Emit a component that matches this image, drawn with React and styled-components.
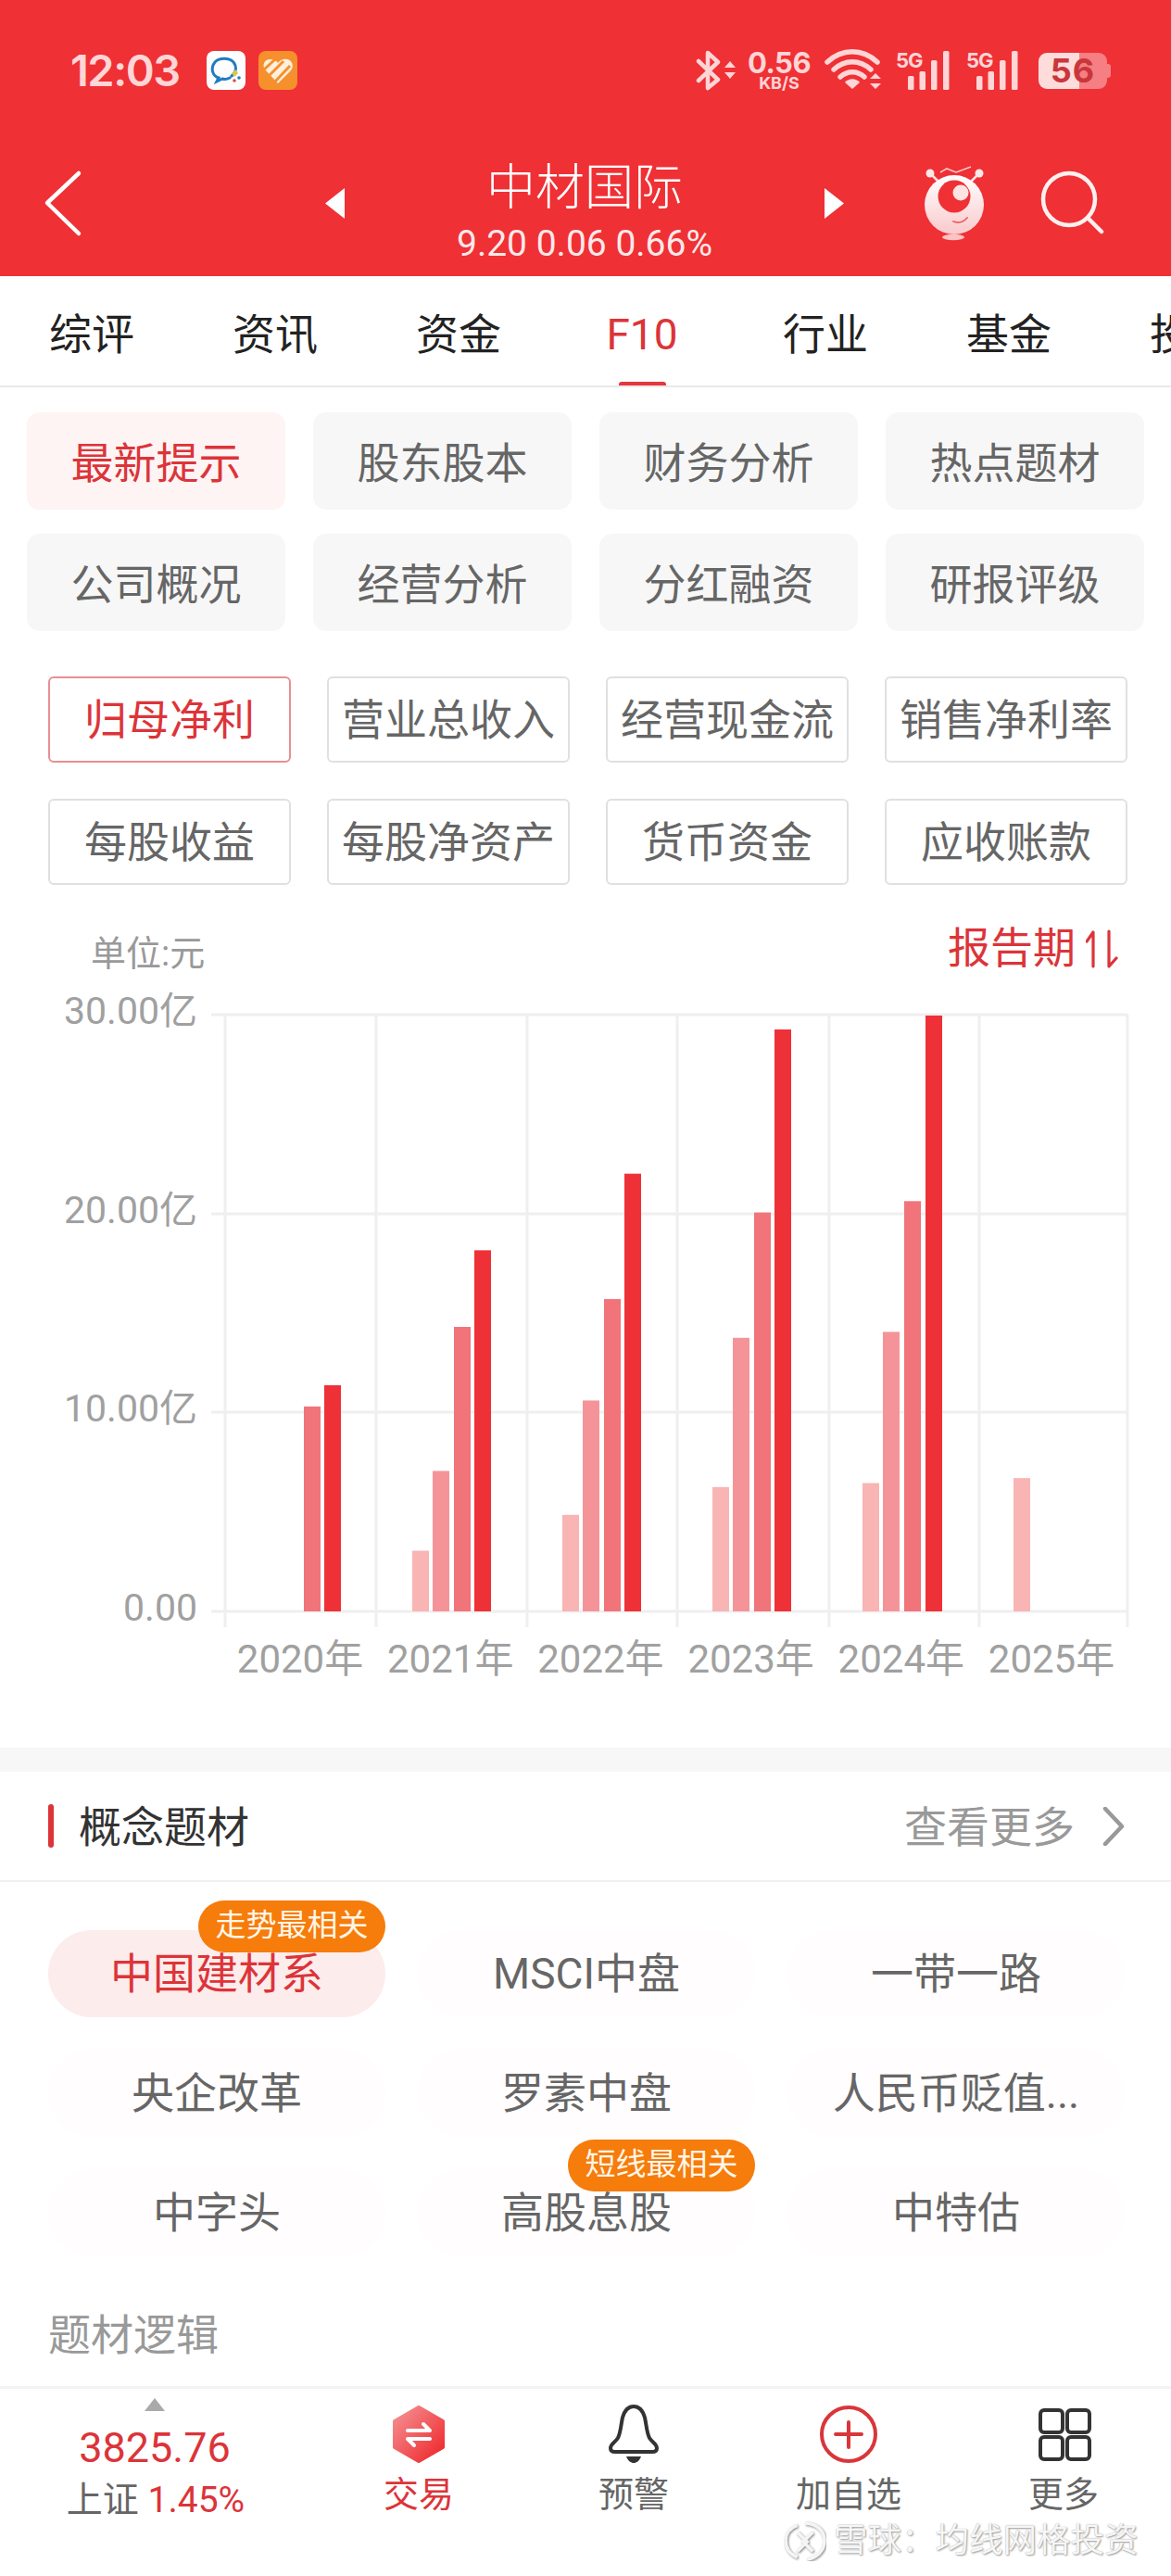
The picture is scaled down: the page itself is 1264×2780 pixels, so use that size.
import React from "react";
import styled, { createGlobalStyle } from "styled-components";

const Global = createGlobalStyle`
  html, body { margin: 0; padding: 0; background: #fff; }
  * { box-sizing: border-box; }
  body { font-family: Roboto, "Noto Sans CJK SC", sans-serif; }
`;

const RED = "#ef3035";
const TEXT_RED = "#dc3439";

const Page = styled.div`
  position: relative;
  width: 1264px;
  height: 2780px;
  overflow: hidden;
  display: flex;
  flex-direction: column;
  background: #fff;
`;

const Header = styled.header`
  height: 298px;
  background: ${RED};
  display: flex;
  flex-direction: column;
  padding-top: 53px;
`;

const StatusBar = styled.div`
  height: 46px;
  display: flex;
  align-items: center;
  color: #ffd5d6;
  padding-left: 76px;
`;

const Clock = styled.div`
  font: 600 47px/46px Inter, sans-serif;
  letter-spacing: -1.5px;
  width: 147px;
`;

const AppBadge = styled.svg`
  width: 42px;
  height: 42px;
  margin-right: 14px;
  display: block;
`;

const StatusRight = styled.div`
  margin-left: auto;
  display: flex;
  align-items: center;
  height: 46px;
`;

const NetSpeed = styled.div`
  width: 70px;
  margin: 0 14px 0 11px;
  display: flex;
  flex-direction: column;
  align-items: center;
  font-family: Inter, sans-serif;
  font-weight: 700;
`;

const NetValue = styled.span`
  font-size: 31px;
  line-height: 27px;
  letter-spacing: -0.5px;
`;

const NetUnit = styled.span`
  font-size: 18px;
  line-height: 17px;
`;

const Battery = styled.div`
  position: relative;
  width: 74px;
  height: 39px;
  margin: 0 69px 0 21px;
  border-radius: 9px;
  background: linear-gradient(to right, #ffdcdc 59%, #f57f82 59%);
  color: #c9363b;
  font: 700 36px/39px Inter, sans-serif;
  text-align: center;
  letter-spacing: 1px;
  &::after {
    content: "";
    position: absolute;
    right: -4px;
    top: 12px;
    width: 4px;
    height: 15px;
    border-radius: 0 3px 3px 0;
    background: #f57f82;
  }
`;

const NavRow = styled.div`
  display: grid;
  grid-template-columns: 351px 21px 518px 21px 1fr;
  align-items: center;
  margin-top: 25px;
  height: 174px;
  padding-top: 16px;
`;

const BackIcon = styled.svg`
  width: 44px;
  height: 74px;
  margin-left: 46px;
  display: block;
`;

const Arrow = styled.svg`
  width: 21px;
  height: 33px;
  display: block;
`;

const TitleBlock = styled.div`
  display: flex;
  flex-direction: column;
  align-items: center;
  color: #fff;
  padding-top: 17px;
`;

const StockName = styled.div`
  font-size: 53px;
  line-height: 62px;
  font-weight: 300;
`;

const StockQuote = styled.div`
  font-size: 39px;
  line-height: 42px;
  margin-top: 8px;
  color: #ffe9e9;
`;

const NavActions = styled.div`
  display: flex;
  align-items: center;
  padding-left: 87px;
`;

const Tabs = styled.nav`
  height: 120px;
  display: flex;
  border-bottom: 2px solid #e9e9e9;
  overflow: hidden;
`;

const Tab = styled.div`
  flex: 0 0 198px;
  height: 120px;
  position: relative;
  padding-top: 32px;
  text-align: center;
  font-size: 46px;
  line-height: 62px;
  color: ${(p) => (p.$active ? TEXT_RED : "#222")};
  ${(p) =>
    p.$active &&
    `
    background: #fff;
    &::after {
      content: "";
      position: absolute;
      left: 74px;
      bottom: 0;
      width: 51px;
      height: 6px;
      border-radius: 3px;
      background: #e5383e;
    }
  `}
`;

const PrimaryGrid = styled.div`
  margin-top: 27px;
  padding: 0 28px 0 29px;
  display: grid;
  grid-template-columns: repeat(4, 279px);
  column-gap: 30px;
  grid-auto-rows: 105px;
  row-gap: 26px;
`;

const PrimaryButton = styled.div`
  display: flex;
  align-items: center;
  justify-content: center;
  padding-bottom: 3px;
  border-radius: 14px;
  font-size: 46px;
  background: ${(p) => (p.$active ? "#fef4f4" : "#f7f7f7")};
  color: ${(p) => (p.$active ? TEXT_RED : "#666")};
`;

const MetricGrid = styled.div`
  margin-top: 49px;
  padding-left: 52px;
  display: grid;
  grid-template-columns: repeat(4, 262px);
  column-gap: 39px;
  grid-auto-rows: 93px;
  row-gap: 39px;
`;

const MetricButton = styled.div`
  display: flex;
  align-items: center;
  justify-content: center;
  padding-bottom: 8px;
  border-radius: 6px;
  font-size: 46px;
  white-space: nowrap;
  border: 2.5px solid ${(p) => (p.$active ? "#e88f92" : "#e0e0e0")};
  color: ${(p) => (p.$active ? TEXT_RED : "#666")};
`;

const ChartHead = styled.div`
  margin-top: 45px;
  height: 60px;
  padding: 0 57px 0 98px;
  display: flex;
  justify-content: space-between;
`;

const UnitLabel = styled.div`
  font-size: 38px;
  line-height: 48px;
  margin-top: 5px;
  color: #999;
`;

const PeriodSort = styled.div`
  display: flex;
  align-items: flex-start;
  font-size: 46px;
  line-height: 48px;
  margin-top: -1px;
  color: ${TEXT_RED};
`;

const SortIcon = styled.svg`
  width: 35px;
  height: 46px;
  margin-left: 11px;
  margin-top: 2px;
  display: block;
`;

const ChartSvg = styled.svg`
  display: block;
  width: 1264px;
  height: 826px;
  font-family: Roboto, "Noto Sans CJK SC", sans-serif;
`;

const Band = styled.div`
  height: 26px;
  background: #f7f7f7;
  flex: none;
`;

const SectionHead = styled.div`
  height: 119px;
  border-bottom: 2px solid #f0f0f0;
  display: flex;
  align-items: center;
  padding: 0 50px 0 52px;
`;

const SectionMark = styled.span`
  width: 6px;
  height: 47px;
  border-radius: 3px;
  background: #dc3439;
  margin-right: 27px;
`;

const SectionTitle = styled.div`
  font-size: 46px;
  color: #333;
  padding-bottom: 5px;
`;

const MoreLink = styled.div`
  margin-left: auto;
  display: flex;
  align-items: center;
  font-size: 46px;
  color: #999;
`;

const MoreLabel = styled.span`
  padding-bottom: 5px;
`;

const MoreChevron = styled.svg`
  width: 24px;
  height: 42px;
  margin-left: 30px;
  display: block;
`;

const PillGrid = styled.div`
  margin-top: 52px;
  padding-left: 52px;
  display: grid;
  grid-template-columns: repeat(3, 364px);
  column-gap: 35px;
  grid-auto-rows: 94px;
  row-gap: 35px;
`;

const Pill = styled.div`
  position: relative;
  display: flex;
  align-items: center;
  justify-content: center;
  padding-bottom: 8px;
  border-radius: 47px;
  font-size: 46px;
  background: ${(p) => (p.$active ? "#fdecec" : "#fffdfd")};
  color: ${(p) => (p.$active ? TEXT_RED : "#666")};
`;

const PillBadge = styled.span`
  position: absolute;
  right: 0;
  top: -32px;
  width: 202px;
  height: 56px;
  border-radius: 28px;
  background: #f67c0b;
  color: #fff6e8;
  font-size: 33px;
  line-height: 54px;
  text-align: center;
  white-space: nowrap;
`;

const LogicLabel = styled.div`
  margin-top: 52px;
  padding-left: 52px;
  font-size: 46px;
  line-height: 66px;
  color: #999;
`;

const BottomBar = styled.footer`
  margin-top: auto;
  height: 205px;
  border-top: 3px solid #f3f3f3;
  display: grid;
  grid-template-columns: 336px repeat(4, 232px);
  padding-top: 17px;
`;

const IndexCell = styled.div`
  display: flex;
  flex-direction: column;
  align-items: center;
  margin-top: -7px;
`;

const IndexCaret = styled.svg`
  width: 22px;
  height: 14px;
  display: block;
  margin-left: -2px;
`;

const IndexValue = styled.div`
  margin-top: 17px;
  font-size: 45px;
  line-height: 46px;
  color: ${TEXT_RED};
  margin-left: -2px;
`;

const IndexLine = styled.div`
  margin-top: 11px;
  font-size: 39px;
  line-height: 44px;
  color: #666;
  white-space: nowrap;
`;

const IndexChange = styled.span`
  color: ${TEXT_RED};
`;

const BarItem = styled.div`
  display: flex;
  flex-direction: column;
  align-items: center;
`;

const BarIcon = styled.svg`
  width: 80px;
  height: 64px;
  display: block;
`;

const BarLabel = styled.div`
  margin-top: 11px;
  font-size: 38px;
  line-height: 44px;
  color: ${(p) => (p.$active ? TEXT_RED : "#666")};
`;

const Watermark = styled.div`
  position: absolute;
  left: 846px;
  top: 2720px;
  display: flex;
  align-items: center;
  gap: 8px;
  color: #f6f6f6;
  font-size: 36.5px;
  line-height: 42px;
  white-space: nowrap;
  text-shadow: 1px 1px 2px #999, 0 0 1px #aaa;
`;

const WatermarkLogo = styled.svg`
  width: 46px;
  height: 44px;
  display: block;
`;

const TAB_NAMES = ["综评", "资讯", "资金", "F10", "行业", "基金", "投资"];
const PRIMARY = ["最新提示", "股东股本", "财务分析", "热点题材", "公司概况", "经营分析", "分红融资", "研报评级"];
const METRICS = ["归母净利", "营业总收入", "经营现金流", "销售净利率", "每股收益", "每股净资产", "货币资金", "应收账款"];
const PILLS = [
  { name: "中国建材系", active: true, badge: "走势最相关" },
  { name: "MSCI中盘" },
  { name: "一带一路" },
  { name: "央企改革" },
  { name: "罗素中盘" },
  { name: "人民币贬值..." },
  { name: "中字头" },
  { name: "高股息股", badge: "短线最相关" },
  { name: "中特估" },
];

// Bars: left edge, billions of yuan, reporting quarter
const QUARTER_FILL = ["#f9b4b4", "#f59498", "#f07479", "#ee3136"];
const BARS = [
  [327, 10.3, 2], [349, 11.37, 3],
  [444, 3.05, 0], [466, 7.06, 1], [489, 14.3, 2], [511, 18.15, 3],
  [606, 4.85, 0], [628, 10.6, 1], [651, 15.7, 2], [673, 22.0, 3],
  [768, 6.25, 0], [790, 13.75, 1], [813, 20.05, 2], [835, 29.25, 3],
  [930, 6.45, 0], [952, 14.05, 1], [975, 20.62, 2], [998, 29.95, 3],
  [1093, 6.7, 0],
];

const AXIS_ZERO = 679;
const PX_PER_BILLION = 21.47;
const V_LINES = [243, 406, 569, 731, 895, 1057, 1217];
const Y_TICKS = [["30.00亿", 35], ["20.00亿", 250], ["10.00亿", 464], ["0.00", 679]];
const YEARS = ["2020年", "2021年", "2022年", "2023年", "2024年", "2025年"];

function Chart() {
  return (
    <ChartSvg viewBox="0 0 1264 826">
      {V_LINES.map((x) => (
        <line key={x} x1={x} x2={x} y1={35} y2={696} stroke="#efefef" strokeWidth="3" />
      ))}
      {Y_TICKS.map(([label, y]) => (
        <g key={label}>
          <line x1={228} x2={1217} y1={y} y2={y} stroke="#efefef" strokeWidth="3" />
          <text x={213} y={y + 10} textAnchor="end" fontSize="41" fill="#a0a0a0">{label}</text>
        </g>
      ))}
      {BARS.map(([x, value, q]) => (
        <rect
          key={x}
          x={x + 1}
          y={AXIS_ZERO - value * PX_PER_BILLION}
          width={18}
          height={value * PX_PER_BILLION}
          fill={QUARTER_FILL[q]}
        />
      ))}
      {YEARS.map((year, i) => (
        <text key={year} x={324 + i * 162.2} y={745} textAnchor="middle" fontSize="42" fill="#a0a0a0">{year}</text>
      ))}
    </ChartSvg>
  );
}

function StatusIcons() {
  const stroke = "#ffd5d6";
  return (
    <StatusRight>
      <svg width="44" height="46" viewBox="752 53 44 46" style={{ display: "block" }}>
        <path d="M755 66 L776 86 L765 95 V57 L776 67 L755 87" fill="none" stroke={stroke} strokeWidth="4.5" strokeLinejoin="round" strokeLinecap="round" />
        <path d="M783 73 L789 66 L795 73 Z M783 78 L789 85 L795 78 Z" fill={stroke} />
      </svg>
      <NetSpeed>
        <NetValue>0.56</NetValue>
        <NetUnit>KB/S</NetUnit>
      </NetSpeed>
      <svg width="62" height="46" viewBox="889 53 62 46" style={{ display: "block" }}>
        <path d="M892 67 C908 52 930 52 946 67" fill="none" stroke={stroke} strokeWidth="5.5" strokeLinecap="round" />
        <path d="M899 75 C911 64 927 64 939 75" fill="none" stroke={stroke} strokeWidth="5.5" strokeLinecap="round" />
        <path d="M906 83 C914 76 924 76 932 83" fill="none" stroke={stroke} strokeWidth="5.5" strokeLinecap="round" />
        <path d="M919 96 L911 89 C915 84 923 84 927 89 Z" fill={stroke} />
        <path d="M938 85 L944 79 L950 85 Z M938 90 L944 96 L950 90 Z" fill={stroke} />
      </svg>
      <svg width="60" height="46" viewBox="963 53 60 46" style={{ marginLeft: 14, display: "block", fontFamily: "Inter, sans-serif" }}>
        <text x="964" y="73" fontSize="22" fontWeight="700" fill={stroke} letterSpacing="-1">5G</text>
        <rect x="977" y="82" width="6.5" height="15" rx="1.5" fill={stroke} />
        <rect x="989.5" y="77" width="6.5" height="20" rx="1.5" fill={stroke} />
        <rect x="1002" y="65" width="6.5" height="32" rx="1.5" fill={stroke} />
        <rect x="1015" y="55" width="6.5" height="42" rx="1.5" fill={stroke} />
      </svg>
      <svg width="58" height="46" viewBox="1039 53 58 46" style={{ marginLeft: 16, display: "block", fontFamily: "Inter, sans-serif" }}>
        <text x="1040" y="73" fontSize="22" fontWeight="700" fill={stroke} letterSpacing="-1">5G</text>
        <rect x="1051" y="82" width="6.5" height="15" rx="1.5" fill={stroke} />
        <rect x="1063.5" y="77" width="6.5" height="20" rx="1.5" fill={stroke} />
        <rect x="1076" y="65" width="6.5" height="32" rx="1.5" fill={stroke} />
        <rect x="1089" y="55" width="6.5" height="42" rx="1.5" fill={stroke} />
      </svg>
      <Battery>56</Battery>
    </StatusRight>
  );
}

export default function App() {
  return (
    <Page>
      <Global />
      <Header>
        <StatusBar>
          <Clock>12:03</Clock>
          <AppBadge viewBox="0 0 42 42">
            <rect width="42" height="42" rx="8" fill="#fdfdfd" />
            <path d="M27 27 C32 23 33 17 29 12 C24 7 14 7 9 12 C4 18 6 27 13 29 L11 33 L17 30 C20 31 23 30 25 29" fill="none" stroke="#1f7cc0" strokeWidth="3" strokeLinecap="round" />
            <path d="M27 24 L31 20 L34 24 L30 28 Z" fill="#d8c94a" />
            <circle cx="35" cy="29" r="1.8" fill="#1f7cc0" />
            <circle cx="30" cy="32" r="1.8" fill="#d8503c" />
          </AppBadge>
          <AppBadge viewBox="0 0 42 42">
            <rect width="42" height="42" rx="8" fill="#f6902c" />
            <path d="M21 35 L7 20 C3 14 8 8 13 9 C17 9 20 11 21 13 C23 10 27 8 31 9 C36 10 39 16 35 21 Z" fill="#fdf0dc" />
            <path d="M5 21 L18 9 M11 27 L27 11 M18 33 L34 16" stroke="#f6902c" strokeWidth="3" />
          </AppBadge>
          <StatusIcons />
        </StatusBar>
        <NavRow>
          <BackIcon viewBox="46 182 44 74">
            <path d="M85 187 L51 219 L85 252" fill="none" stroke="#fff" strokeWidth="4.5" strokeLinecap="round" strokeLinejoin="round" />
          </BackIcon>
          <Arrow viewBox="0 0 21 33"><path d="M21 0 V33 L0 16.5 Z" fill="#fff" /></Arrow>
          <TitleBlock>
            <StockName>中材国际</StockName>
            <StockQuote>9.20 0.06 0.66%</StockQuote>
          </TitleBlock>
          <Arrow viewBox="0 0 21 33"><path d="M0 0 V33 L21 16.5 Z" fill="#fff" /></Arrow>
          <NavActions>
            <svg width="66" height="84" viewBox="998 178 66 84" style={{ display: "block" }}>
              <defs>
                <linearGradient id="mascotBody" x1="0" y1="0" x2="0" y2="1">
                  <stop offset="0" stopColor="#fff" />
                  <stop offset="1" stopColor="#f9c9cb" />
                </linearGradient>
              </defs>
              <path d="M1015 187 L1022 183 L1032 187 L1048 181" fill="none" stroke="#fbc9ca" strokeWidth="1.6" />
              <path d="M1004 188 L1014 198 M1057 188 L1047 198" stroke="#fde2e2" strokeWidth="2.5" />
              <circle cx="1004" cy="188" r="4.5" fill="#fde8e8" />
              <circle cx="1057" cy="188" r="4.5" fill="#fde8e8" />
              <circle cx="1030" cy="222" r="32" fill="url(#mascotBody)" />
              <circle cx="1030" cy="213" r="17.5" fill={RED} />
              <circle cx="1037" cy="209" r="8.5" fill="#fde3e3" />
              <path d="M1029 240 C1034 242 1040 241 1044 236" fill="none" stroke="#ee5a5f" strokeWidth="1.8" strokeLinecap="round" />
              <ellipse cx="1029" cy="257" rx="12" ry="3.2" fill="#fbc3c4" />
            </svg>
            <svg width="70" height="70" viewBox="1120 185 70 70" style={{ marginLeft: 58, display: "block" }}>
              <circle cx="1152" cy="216" r="28" fill="none" stroke="#fff0f0" strokeWidth="4.5" />
              <path d="M1172 236 L1187 251" stroke="#fff0f0" strokeWidth="4.5" strokeLinecap="round" />
            </svg>
          </NavActions>
        </NavRow>
      </Header>

      <Tabs>
        {TAB_NAMES.map((name) => (
          <Tab key={name} $active={name === "F10"}>{name}</Tab>
        ))}
      </Tabs>

      <PrimaryGrid>
        {PRIMARY.map((name, i) => (
          <PrimaryButton key={name} $active={i === 0}>{name}</PrimaryButton>
        ))}
      </PrimaryGrid>

      <MetricGrid>
        {METRICS.map((name, i) => (
          <MetricButton key={name} $active={i === 0}>{name}</MetricButton>
        ))}
      </MetricGrid>

      <ChartHead>
        <UnitLabel>单位:元</UnitLabel>
        <PeriodSort>
          报告期
          <SortIcon viewBox="1172 1001 35 46">
            <path d="M1173 1016 L1180 1006 V1043" fill="none" stroke={TEXT_RED} strokeWidth="3.2" strokeLinecap="round" strokeLinejoin="round" />
            <path d="M1197 1005 V1043 L1205 1034" fill="none" stroke={TEXT_RED} strokeWidth="3.2" strokeLinecap="round" strokeLinejoin="round" />
          </SortIcon>
        </PeriodSort>
      </ChartHead>

      <Chart />

      <Band />

      <SectionHead>
        <SectionMark />
        <SectionTitle>概念题材</SectionTitle>
        <MoreLink>
          <MoreLabel>查看更多</MoreLabel>
          <MoreChevron viewBox="0 0 24 42">
            <path d="M3 2 L21 21 L3 40" fill="none" stroke="#999" strokeWidth="4.5" strokeLinecap="round" strokeLinejoin="round" />
          </MoreChevron>
        </MoreLink>
      </SectionHead>

      <PillGrid>
        {PILLS.map((pill) => (
          <Pill key={pill.name} $active={pill.active}>
            {pill.name}
            {pill.badge && <PillBadge>{pill.badge}</PillBadge>}
          </Pill>
        ))}
      </PillGrid>

      <LogicLabel>题材逻辑</LogicLabel>

      <BottomBar>
        <IndexCell>
          <IndexCaret viewBox="0 0 22 14"><path d="M11 0 L22 14 H0 Z" fill="#aaa" /></IndexCaret>
          <IndexValue>3825.76</IndexValue>
          <IndexLine>上证 <IndexChange>1.45%</IndexChange></IndexLine>
        </IndexCell>
        <BarItem>
          <BarIcon viewBox="412 2594 80 64">
            <defs>
              <linearGradient id="tradeFill" x1="0" y1="0" x2="1" y2="1">
                <stop offset="0" stopColor="#f59396" />
                <stop offset="1" stopColor="#ee2427" />
              </linearGradient>
            </defs>
            <path d="M452 2597 L478 2612 V2640 L452 2655 L426 2640 V2612 Z" fill="url(#tradeFill)" stroke="url(#tradeFill)" strokeWidth="4" strokeLinejoin="round" />
            <path d="M440 2622 H464 L457 2615" fill="none" stroke="#fff" strokeWidth="4" strokeLinecap="round" strokeLinejoin="round" />
            <path d="M464 2631 H440 L447 2638" fill="none" stroke="#fff" strokeWidth="4" strokeLinecap="round" strokeLinejoin="round" />
          </BarIcon>
          <BarLabel $active>交易</BarLabel>
        </BarItem>
        <BarItem>
          <BarIcon viewBox="644 2594 80 64">
            <path d="M684 2596 C691 2596 694 2601 696 2608 C698 2617 698 2624 701 2630 C704 2635 709 2636 709 2641 C709 2644 707 2645 704 2645 H664 C661 2645 659 2644 659 2641 C659 2636 664 2635 667 2630 C670 2624 670 2617 672 2608 C674 2601 677 2596 684 2596 Z" fill="none" stroke="#333" strokeWidth="4" strokeLinejoin="round" />
            <path d="M676 2650 H692 C690 2655 687 2657 684 2657 C681 2657 678 2655 676 2650 Z" fill="#333" />
          </BarIcon>
          <BarLabel>预警</BarLabel>
        </BarItem>
        <BarItem>
          <BarIcon viewBox="877 2594 80 64">
            <circle cx="917" cy="2626" r="29" fill="none" stroke="#d9363a" strokeWidth="4" />
            <path d="M917 2613 V2640 M903 2626 H931" stroke="#d9363a" strokeWidth="4" strokeLinecap="round" />
          </BarIcon>
          <BarLabel>加自选</BarLabel>
        </BarItem>
        <BarItem>
          <BarIcon viewBox="1108 2594 80 64">
            <rect x="1123" y="2600" width="24" height="24" rx="4" fill="none" stroke="#333" strokeWidth="4" />
            <rect x="1152" y="2600" width="24" height="24" rx="4" fill="none" stroke="#333" strokeWidth="4" />
            <rect x="1123" y="2629" width="24" height="24" rx="4" fill="none" stroke="#333" strokeWidth="4" />
            <rect x="1152" y="2629" width="24" height="24" rx="4" fill="none" stroke="#333" strokeWidth="4" />
          </BarIcon>
          <BarLabel>更多</BarLabel>
        </BarItem>
      </BottomBar>

      <Watermark>
        <WatermarkLogo viewBox="0 0 44 42">
          <g fill="none" stroke="#f4f4f4" strokeWidth="3.5" style={{ filter: "drop-shadow(1px 1px 1px #888)" }}>
            <path d="M14 5 C5 8 2 15 2 21 C2 29 7 35 14 38" />
            <path d="M22 3 C34 3 42 11 42 21 C42 31 34 39 24 40" />
            <path d="M14 12 L24 22 L14 32 M30 12 L20 22 L30 32" />
          </g>
        </WatermarkLogo>
        <span>雪球：均线网格投资</span>
      </Watermark>
    </Page>
  );
}
